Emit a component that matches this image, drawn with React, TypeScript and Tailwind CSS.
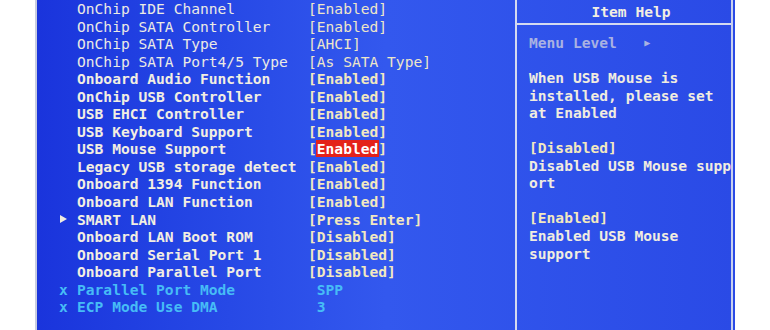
const rows: {
  label: string;
  value: string;
  mark?: "arrow" | "x";
  thin?: boolean;
  active?: boolean;
}[] = [
  { label: "OnChip IDE Channel", value: "[Enabled]", thin: true },
  { label: "OnChip SATA Controller", value: "[Enabled]", thin: true },
  { label: "OnChip SATA Type", value: "[AHCI]", thin: true },
  { label: "OnChip SATA Port4/5 Type", value: "[As SATA Type]", thin: true },
  { label: "Onboard Audio Function", value: "[Enabled]" },
  { label: "OnChip USB Controller", value: "[Enabled]" },
  { label: "USB EHCI Controller", value: "[Enabled]" },
  { label: "USB Keyboard Support", value: "[Enabled]" },
  { label: "USB Mouse Support", value: "[Enabled]", active: true },
  { label: "Legacy USB storage detect", value: "[Enabled]" },
  { label: "Onboard 1394 Function", value: "[Enabled]" },
  { label: "Onboard LAN Function", value: "[Enabled]" },
  { label: "SMART LAN", value: "[Press Enter]", mark: "arrow" },
  { label: "Onboard LAN Boot ROM", value: "[Disabled]" },
  { label: "Onboard Serial Port 1", value: "[Disabled]" },
  { label: "Onboard Parallel Port", value: "[Disabled]" },
  { label: "Parallel Port Mode", value: " SPP", mark: "x" },
  { label: "ECP Mode Use DMA", value: " 3", mark: "x" },
];

const help: { text: string; tone?: "value" }[] = [
  { text: "[Disabled]", tone: "value" },
  { text: "Disabled USB Mouse supp" },
  { text: "ort" },
  { text: "" },
  { text: "[Enabled]", tone: "value" },
  { text: "Enabled USB Mouse" },
  { text: "support" },
];

function Arrow() {
  return (
    <svg width="9" height="10" viewBox="0 0 9 10" className="inline-block">
      <path d="M1 1 L8 5 L1 9 Z" fill="#f0ece0" />
    </svg>
  );
}

export default function App() {
  return (
    <div
      className="w-[770px] h-[330px] bg-white flex overflow-hidden"
      style={{ fontFamily: '"DejaVu Sans Mono", "Liberation Mono", monospace' }}
    >
      <div className="ml-[35px] w-[700px] h-full flex border-l-2 border-[#c8cce0] bg-gradient-to-r from-[#1a34dc] via-[#3358ee] to-[#2a4ae6]">
        {/* settings list */}
        <section className="w-[478px] text-[14.6px] leading-[17.55px]">
          {rows.map((r) => {
            const cyan = r.mark === "x";
            return (
              <div key={r.label} className="flex h-[17.55px] whitespace-pre">
                <span className="w-[40px] pl-[22px] flex items-center">
                  {r.mark === "arrow" && <Arrow />}
                  {r.mark === "x" && (
                    <span className="text-[#46bcf6] font-bold">x</span>
                  )}
                </span>
                <span
                  className={
                    "w-[231px] " +
                    (cyan
                      ? "text-[#46bcf6] font-bold"
                      : r.thin
                        ? "text-[#eceae4] font-normal"
                        : "text-[#f2eee2] font-bold")
                  }
                >
                  {r.label}
                </span>
                {r.active ? (
                  <span className="text-[#f2e8c0] font-bold">
                    [
                    <span className="bg-[#e4221a] text-white px-[1px] -mx-[1px]">
                      Enabled
                    </span>
                    ]
                  </span>
                ) : (
                  <span
                    className={
                      cyan
                        ? "text-[#46bcf6] font-bold"
                        : r.thin
                          ? "text-[#eee6c8] font-normal"
                          : "text-[#f2e8c0] font-bold"
                    }
                  >
                    {r.value}
                  </span>
                )}
              </div>
            );
          })}
        </section>

        {/* divider */}
        <div className="w-[2px] bg-[#d4daf0]" />

        {/* item help */}
        <aside className="w-[216px] text-[14.6px] leading-[17.55px] border-r-2 border-[#c8d0ee]">
          <div className="h-[23px] flex items-center justify-center pl-[14px] text-[#f2eee2] font-bold">
            Item Help
          </div>
          <div className="h-[2px] bg-[#d4daf0]" />
          <div className="pl-[12px] pt-[9px] font-bold whitespace-pre">
            <div className="h-[17.55px] text-[#a9b2e2] flex items-center">
              Menu Level{"   "}
              <span className="text-[10px] ml-[1px]">▶</span>
            </div>
            <div className="h-[17.55px]" />
            <div className="h-[17.55px] text-[#f0ece0]">When USB Mouse is</div>
            <div className="h-[17.55px] text-[#f0ece0]">installed, please set</div>
            <div className="h-[17.55px] text-[#f0ece0]">at Enabled</div>
            <div className="h-[17.55px]" />
            {help.map((h, i) => (
              <div
                key={i}
                className={
                  "h-[17.55px] " +
                  (h.tone === "value" ? "text-[#f2e8c0]" : "text-[#f0ece0]")
                }
              >
                {h.text}
              </div>
            ))}
          </div>
        </aside>
      </div>
    </div>
  );
}
